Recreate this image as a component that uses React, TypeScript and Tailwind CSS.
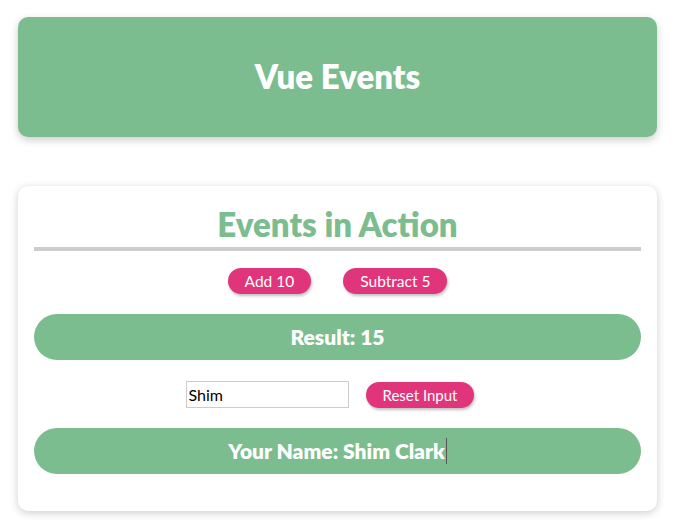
import { useState } from 'react'

export default function App() {
  const [result, setResult] = useState(15)
  const [name, setName] = useState('Shim')

  const btn =
    'h-[26px] rounded-full bg-[#e0357a] px-[17px] text-[15.5px] leading-[26px] text-white shadow-[1px_2px_3px_rgba(0,0,0,0.25)]'

  return (
    <div className="min-h-[530px] bg-white pl-[18px] pr-[16px] pt-[17px] font-['Lato',sans-serif]">
      <div className="flex h-[120px] items-center justify-center rounded-[10px] bg-[#7bbd8f] shadow-[0_3px_8px_rgba(0,0,0,0.2)]">
        <h1 className="text-[33px] font-extrabold text-white">Vue Events</h1>
      </div>

      <div className="mt-[49px] flex flex-col rounded-[10px] bg-white px-4 pb-[37px] pt-[20px] shadow-[0_2px_8px_rgba(0,0,0,0.2)]">
        <h2 className="text-center text-[33px] font-extrabold leading-[36px] text-[#7bbd8f]">Events in Action</h2>
        <div className="mt-[5px] h-[4px] bg-[#cccccc]" />

        <div className="mt-[17px] flex justify-center gap-[32px]">
          <button className={btn} onClick={() => setResult(result + 10)}>Add 10</button>
          <button className={btn} onClick={() => setResult(result - 5)}>Subtract 5</button>
        </div>

        <div className="mt-[20px] flex h-[46px] items-center justify-center rounded-full bg-[#7bbd8f] text-[21px] font-extrabold text-white">
          Result: {result}
        </div>

        <div className="mt-[21px] flex items-center justify-center gap-[17px] pr-[15px]">
          <input
            value={name}
            onChange={e => setName(e.target.value)}
            className="h-[27px] w-[163px] border border-[#cccccc] px-[1px] text-[16px] text-black outline-none"
          />
          <button
            className="h-[26px] rounded-full bg-[#e0357a] px-[16px] text-[15px] leading-[26px] text-white shadow-[1px_2px_3px_rgba(0,0,0,0.25)]"
            onClick={() => setName('')}
          >
            Reset Input
          </button>
        </div>

        <div className="mt-[20px] flex h-[46px] items-center justify-center rounded-full bg-[#7bbd8f] text-[21px] font-extrabold text-white">
          <span>Your Name: {name} Clark</span>
          <span className="ml-[1px] h-[26px] w-[1px] bg-[#555]" />
        </div>
      </div>
    </div>
  )
}
